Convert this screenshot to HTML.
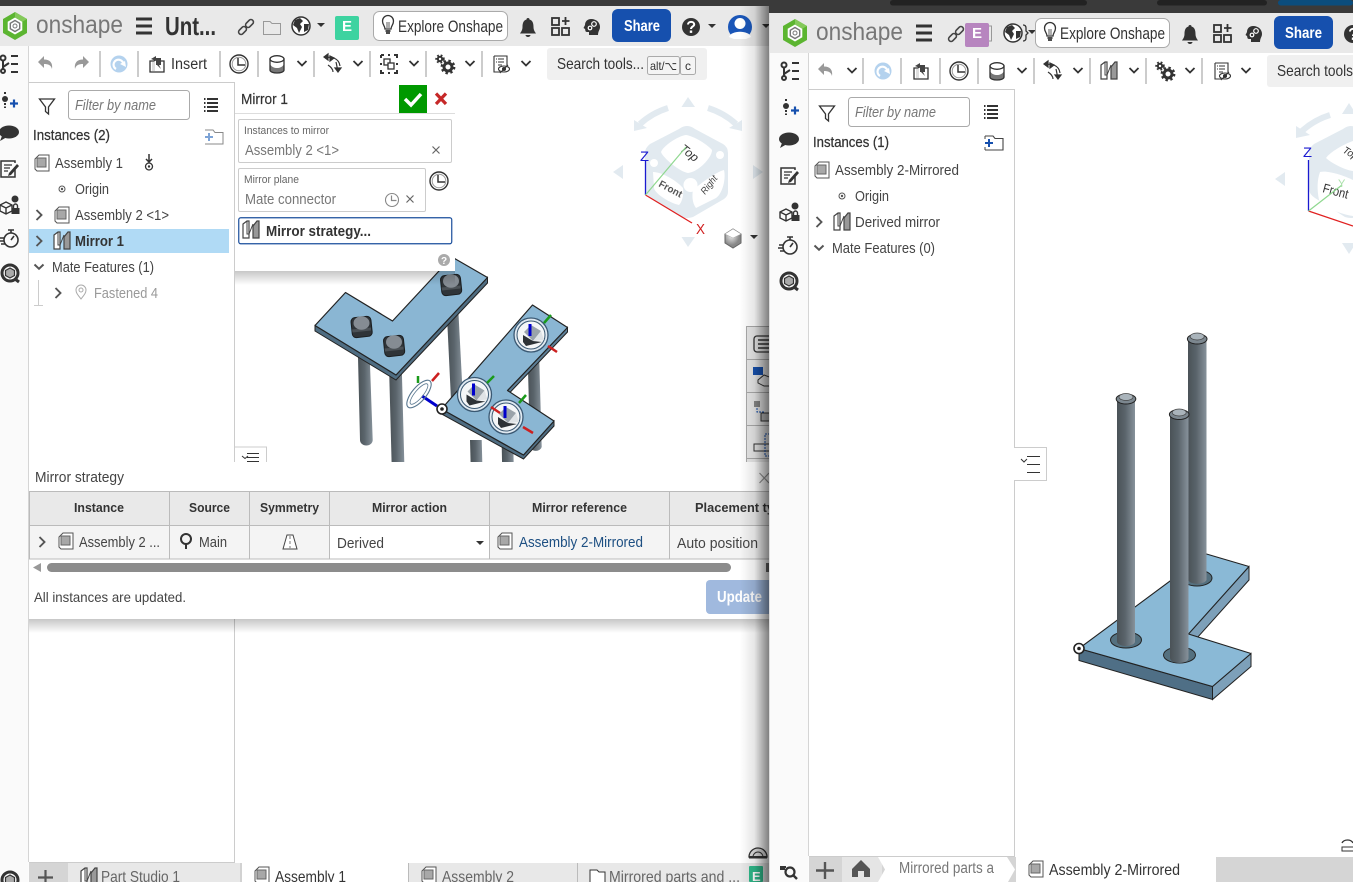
<!DOCTYPE html>
<html><head><meta charset="utf-8"><title>Onshape</title>
<style>
html,body{margin:0;padding:0;background:#fff;width:1353px;height:882px;overflow:hidden}
svg{display:block;position:absolute;left:0;top:0}
text{font-family:"Liberation Sans",sans-serif;font-size:14px;fill:#444}
.t{font-size:15px;fill:#444}
.b{font-weight:bold;fill:#333}
.m{font-size:13px;font-weight:bold;fill:#333}
.g{fill:#777}
.ph{font-style:italic;fill:#777;font-size:14.5px}
.l{font-size:11px;fill:#666}
</style></head><body>
<svg width="1353" height="882" viewBox="0 0 1353 882" xmlns="http://www.w3.org/2000/svg">
<defs>
<linearGradient id="cylg" x1="0" x2="1" y1="0" y2="0"><stop offset="0" stop-color="#4a5257"/><stop offset=".45" stop-color="#5a646b"/><stop offset="1" stop-color="#87929b"/></linearGradient>
<linearGradient id="sh" x1="0" x2="1" y1="0" y2="0"><stop offset="0" stop-color="#000" stop-opacity="0"/><stop offset=".5" stop-color="#000" stop-opacity=".1"/><stop offset="1" stop-color="#000" stop-opacity=".5"/></linearGradient>
<linearGradient id="shv" x1="0" x2="0" y1="0" y2="1"><stop offset="0" stop-color="#000" stop-opacity=".22"/><stop offset="1" stop-color="#000" stop-opacity="0"/></linearGradient>
<radialGradient id="cubeg" cx=".4" cy=".35"><stop offset="0" stop-color="#eee"/><stop offset="1" stop-color="#888"/></radialGradient>
<clipPath id="cleft"><rect x="0" y="0" width="769" height="882"/></clipPath>
<clipPath id="cright"><rect x="769" y="0" width="584" height="882"/></clipPath>
<clipPath id="cvp"><rect x="235" y="83" width="534" height="379"/></clipPath>

<g id="logo"><path d="M0 -14 L12 -7 V7 L0 14 L-12 7 V-7Z" fill="#5cb531"/><path d="M0 -8.500 L7.300 -4.200 V4.200 L0 8.500 L-7.300 4.200 V-4.200Z" fill="#fff"/><path d="M0 -14 L12 -7 L7.300 -4.200 L0 -8.500Z" fill="#84c95a"/><path d="M0 -5.500 L4.700 -2.700 V2.700 L0 5.500 L-4.700 2.700 V-2.700Z" fill="none" stroke="#777" stroke-width="1.400"/><circle r="2" fill="none" stroke="#777" stroke-width="1"/></g>
<g id="burger"><path d="M0 -8.500 H16 V-5.500 H0Z M0 -1.500 H16 V1.500 H0Z M0 5.500 H16 V8.500 H0Z" fill="#333"/></g>
<g id="link" fill="none" stroke="#444" stroke-width="1.600"><rect x="-8" y="-2.500" width="9" height="5" rx="2.500" transform="rotate(-45 -3.500 3.500) translate(0 3.500)"/><rect x="-1" y="-2.500" width="9" height="5" rx="2.500" transform="rotate(-45 3.500 -3.500) translate(0 -3.500)"/></g>
<g id="globe"><circle r="9" fill="#fff" stroke="#333" stroke-width="1.500"/><path d="M-6 -6 L-1 -8 L2 -5 L-1 -2 L1 1 L-2 7 L-4 2 L-8 -1Z M3 -2 L8 -2 L7 4 L3 6Z" fill="#333"/></g>
<g id="caret"><path d="M-4 -2 H4 L0 2Z" fill="#333"/></g>
<g id="bulb" fill="none" stroke="#333" stroke-width="1.300"><path d="M-3 4 C-3 1 -5.500 0 -5.500 -4 A5.500 5.500 0 0 1 5.500 -4 C5.500 0 3 1 3 4Z"/><path d="M-2.500 6 H2.500 M-2 8 H2" stroke-width="1.800"/><path d="M-1 3 V-3 M1 3 V-3" stroke-width=".8"/></g>
<g id="bell"><path d="M0 -9 C1 -9 1.500 -8.500 1.500 -7.500 C5 -6.500 5.500 -3 5.500 0 C5.500 3 7 5 8 6.500 H-8 C-7 5 -5.500 3 -5.500 0 C-5.500 -3 -5 -6.500 -1.500 -7.500 C-1.500 -8.500 -1 -9 0 -9Z M-2.500 8 H2.500 A2.500 2 0 0 1 -2.500 8Z" fill="#333"/></g>
<g id="apps" fill="none" stroke="#333" stroke-width="1.800"><rect x="-8" y="-8" width="7" height="7"/><rect x="-8" y="2" width="7" height="7"/><rect x="2" y="2" width="7" height="7"/><path d="M5.500 -9 V-1 M2 -5 H9.500"/></g>
<g id="head"><path d="M-1 -8 C5 -8 8 -4 8 0 C8 3 6 4 6 8 H-3 V5 H-5 C-7 5 -6.500 3 -7 2 L-8.500 1 L-7 -2 C-7 -6 -4 -8 -1 -8Z" fill="#333"/><circle cx="2" cy="-3" r="2.300" fill="none" stroke="#fff" stroke-width="1.200"/><circle cx="-2" cy="1" r="1.800" fill="none" stroke="#fff" stroke-width="1.200"/></g>
<g id="help"><circle r="9" fill="#333"/><path d="M-3 -2.500 C-3 -6 3.200 -6 3.200 -2.500 C3.200 -.5 0 -.5 0 2" fill="none" stroke="#fff" stroke-width="2"/><rect x="-1.200" y="3.500" width="2.400" height="2.400" fill="#fff"/></g>
<g id="undo"><path d="M-8 -1 L-2 -7 V-3.500 C4 -3.500 7 0 6 6 C5 2 2 1 -2 1 V5Z" fill="#999"/></g>
<g id="refresh"><circle r="8.500" fill="#b4d2ee"/><path d="M-3 5 A5 5 0 1 1 4.500 1" fill="none" stroke="#fff" stroke-width="2.200"/><path d="M1 0 L6 -3 L7 3Z" fill="#fff"/></g>
<g id="insert"><path d="M-7 -3 H-3 L-1 -5 H3 V-3 H7 V8 H-7Z" fill="#fff" stroke="#333" stroke-width="1.300"/><path d="M-6 -5 L-1 -8 V-6 H4 V1 H2 L4 5 L0 1 H-1 V-3Z" fill="#444"/><rect x="-5" y="-2" width="3" height="9" fill="#ddd"/></g>
<g id="clock"><circle r="9" fill="#fff" stroke="#333" stroke-width="1.400"/><circle r="6.800" fill="none" stroke="#999" stroke-width="1"/><path d="M-1 -6 V1 H6" fill="none" stroke="#333" stroke-width="1.500"/></g>
<g id="cylicon"><path d="M-7 -5 V6 C-7 10 7 10 7 6 V-5Z" fill="#777" stroke="#333" stroke-width="1.300"/><path d="M-6.300 -4 V1 C-4 5 4 5 6.300 1 V-4Z" fill="#fff"/><ellipse cy="-5" rx="7" ry="3.300" fill="#fff" stroke="#333" stroke-width="1.300"/></g>
<g id="chev"><path d="M-4.500 -2 L0 2.500 L4.500 -2" fill="none" stroke="#333" stroke-width="1.800"/></g>
<g id="chevb"><path d="M-4.500 -2.500 L0 1.800 L4.500 -2.500" fill="none" stroke="#555" stroke-width="2"/></g>
<g id="chevr"><path d="M-2.500 -5 L2.500 0 L-2.500 5" fill="none" stroke="#555" stroke-width="1.900"/></g>
<g id="mate" fill="none" stroke="#333" stroke-width="1.200"><path d="M-8 -5 C-2 -7 6 -5 7 3 M-5 2 C-2 4 0 6 0 9 M3 -1 C4 3 4 5 5 8" /><path d="M-9 -6 L-5 -9 V-3Z M-3 -7 L1 -5 L-3 -2Z M2 5 H8 L5 9Z" fill="#333"/></g>
<g id="boxes" fill="none" stroke="#333" stroke-width="1.300"><rect x="-5" y="-5" width="6" height="6" fill="#fff"/><rect x="-1" y="-1" width="6" height="6" fill="#fff"/><path d="M-8 -9 H-5 M-8 -9 V-6 M5 -9 H8 V-6 M-8 6 V9 H-5 M5 9 H8 V6 M-1 -9 H1 M-1 9 H1 M-8 -1 V1 M8 -1 V1" stroke-width="2"/></g>
<g id="gears"><g fill="none" stroke="#333"><circle cx="3" cy="3" r="4" stroke-width="3"/><circle cx="3" cy="3" r="6.200" stroke-width="2.400" stroke-dasharray="2.400 2.500"/><circle cx="-5" cy="-5" r="2.200" stroke-width="2"/><circle cx="-5" cy="-5" r="3.800" stroke-width="1.800" stroke-dasharray="1.800 1.900"/></g></g>
<g id="note" fill="none" stroke="#333" stroke-width="1.100"><path d="M-7 -8 H6 V2 M-7 -8 V8 H-1"/><path d="M-3 -5 H3 M-3 -2 H3 M-3 1 H1 M-5 -5 H-4 M-5 -2 H-4" /><ellipse cx="3" cy="5" rx="5.500" ry="3" fill="#fff"/><circle cx="3" cy="5" r="1.500" fill="#333"/><path d="M-1 9 L7 1" /></g>
<g id="mirror"><path d="M-8 -6 L-4 -9 H-2 V8 H-8Z" fill="#fff" stroke="#444" stroke-width="1.200"/><path d="M2 8 V-4 L6 -9 H8 V8Z" fill="#999" stroke="#444" stroke-width="1.200"/><path d="M-2 4 L2 -6 M-4 -9 V4 H-2" fill="none" stroke="#444" stroke-width="1"/></g>
<g id="funnel"><path d="M-7.500 -7 H7.500 L1.500 1 V8 L-1.500 5.500 V1Z" fill="#fff" stroke="#333" stroke-width="1.300"/></g>
<g id="list"><path d="M-4 -6 H7 M-4 -2 H7 M-4 2 H7 M-4 6 H7 M-7 -6 H-5.500 M-7 -2 H-5.500 M-7 2 H-5.500 M-7 6 H-5.500" stroke="#333" stroke-width="2"/></g>
<g id="fplus"><path d="M-9 -7 H-1 L1 -4.500 H9 V7 H-9" fill="#fff" stroke="#444" stroke-width="1.100"/><path d="M-9 -7 V-4 M-9 4 V7" stroke="#444"/><path d="M-9 0 H-1 M-5 -4 V4" stroke="#1650ae" stroke-width="2"/></g>
<g id="fplusl"><path d="M-9 -7 H-1 L1 -4.500 H9 V7 H-9" fill="#fff" stroke="#888" stroke-width="1"/><path d="M-9 0 H-1 M-5 -4 V4" stroke="#7da3d6" stroke-width="2"/></g>
<g id="asm"><path d="M-7 -4 L-3 -8 H7 V8 H-5 L-7 6Z" fill="#fff" stroke="#555" stroke-width="1"/><rect x="-5" y="-5" width="9" height="9" fill="#a8a8a8" stroke="#666"/></g>
<g id="origin"><circle r="3" fill="#fff" stroke="#555"/><circle r="1.200" fill="#555"/></g>
<g id="axis"><circle r="5" fill="#fff" stroke="#222" stroke-width="1.600"/><circle r="1.800" fill="#222"/></g>
<g id="tree" fill="none" stroke="#333" stroke-width="2"><circle cx="-6" cy="-6" r="2.500"/><circle cx="-6" cy="7" r="2"/><path d="M-6 -3 V5 M-6 3 L0 -1 M2 -8 H9 M2 0 H9 M2 8 H9"/></g>
<g id="addpt"><path d="M-4 -8 V-6 M-4 3 V8" stroke="#333" stroke-width="2" stroke-dasharray="2 1.500"/><circle cx="-4" cy="-1" r="3" fill="#333"/><path d="M1 3.500 H9 M5 -.500 V7.500" stroke="#1650ae" stroke-width="2.200"/></g>
<g id="bubble"><ellipse cx="0" cy="-2" rx="10" ry="6.500" fill="#333"/><path d="M-7 2 L-9 7 L-2 3Z" fill="#333"/></g>
<g id="form" fill="none" stroke="#333" stroke-width="1.500"><path d="M6 -2 V8 H-8 V-8 H6 V-6"/><path d="M-5 -4 H3 M-5 -1 H1 M-5 2 H-1" stroke-width="1.200"/><path d="M0 4 L8 -5 L10 -3 L2 6 L-1 7Z" fill="#333" stroke="none"/></g>
<g id="parts" fill="none" stroke="#333" stroke-width="1.400"><path d="M-9 0 L-3 -3 L3 0 V6 L-3 9 L-9 6Z M-9 0 L-3 3 L3 0 M-3 3 V9"/><circle cx="6" cy="-6" r="3.500" fill="#333" stroke="none"/><rect x="2.500" y="3" width="8" height="6" fill="#333" stroke="none"/><path d="M4.500 3 V1 A2 2 0 0 1 8.500 1 V3"/></g>
<g id="timer" fill="none" stroke="#333" stroke-width="1.600"><circle cx="2" cy="1" r="7"/><path d="M-1 -9 H5 M2 -9 V-6 M2 1 L5 -3 M-9 -1 H-5 M-10 2 H-5 M-8 5 H-4"/></g>
<g id="search"><circle r="8" fill="none" stroke="#333" stroke-width="3"/><path d="M0 -5 L4.500 -2.500 V2.500 L0 5 L-4.500 2.500 V-2.500Z" fill="#aaa" stroke="#333" stroke-width="1.200"/><path d="M5 6 L9 9" stroke="#333" stroke-width="3"/></g>
<g id="x"><path d="M-3.500 -3.500 L3.500 3.500 M3.500 -3.500 L-3.500 3.500" stroke="#666" stroke-width="1.200" fill="none"/></g>
<g id="smallclock"><circle r="6.500" fill="#fff" stroke="#888" stroke-width="1.100"/><path d="M-.5 -4.500 V.5 H4.500" fill="none" stroke="#888" stroke-width="1.200"/></g>
<g id="pin"><circle cy="-2" r="5" fill="none" stroke="#333" stroke-width="2"/><path d="M0 3 V8" stroke="#333" stroke-width="2"/></g>
<g id="tri"><path d="M-7 7 L-3 -7 H3 L7 7Z" fill="#fff" stroke="#444"/><path d="M0 -6 V7" stroke="#999" stroke-width="1.300" stroke-dasharray="3 2"/></g>
<g id="screw"><rect x="-10" y="-9" width="20" height="20" rx="4" transform="rotate(-6)" fill="#2f3438" stroke="#1b1e20"/><path d="M-9.500 3.500 L9.500 1.500 V4.500 L-9 6.500Z" fill="#4b5156"/><ellipse cy="-3" rx="8" ry="6.800" fill="#858c93"/></g>
<g id="conn"><circle r="17" fill="#dfe9f1" stroke="#3a5872" stroke-width="1.300"/><circle r="14" fill="#f4f6f7" stroke="#3a5872" stroke-width="1"/><path d="M-7 -3 L0 -10 L10 -4 L2 6Z" fill="#9aa3aa"/><path d="M10 -4 L13 5 L2 6Z" fill="#dfe3e6"/><path d="M-8 0 L2 6 L11 7 L-5 11 L-8 7Z" fill="#2d3236"/><path d="M-1 -11 V1" stroke="#0000cc" stroke-width="3"/></g>
<g id="frame"><path d="M0 -46 Q4 -46 8 -43 L36 -28 Q41 -25 41 -19 V20 Q41 24 37 27 L6 45 Q0 47 -6 45 L-36 26 Q-42 22 -42 17 V-19 Q-42 -24 -37 -28 L-8 -43 Q-4 -46 0 -46Z" fill="#e2eaf0"/></g>
</defs>

<!-- LEFT WINDOW -->
<g clip-path="url(#cleft)">
<rect width="769" height="882" fill="#fff"/>
<rect width="769" height="6" fill="#3a3a3a"/>
<rect y="6" width="769" height="40" fill="#e9e9e9"/>
<use href="#logo" x="15" y="26"/>
<text x="36" y="33" style="font-size:25px;fill:#777" textLength="87" lengthAdjust="spacingAndGlyphs">onshape</text>
<use href="#burger" x="136" y="26"/>
<text x="165" y="35" style="font-size:26px;font-weight:bold;fill:#333" textLength="51" lengthAdjust="spacingAndGlyphs">Unt...</text>
<use href="#link" x="246" y="27"/>
<path d="M263.500 34.500 V21.500 H270 L272 23.500 H280.500 V34.500Z" fill="none" stroke="#999" stroke-width="1"/>
<use href="#globe" x="301" y="26"/>
<use href="#caret" x="321" y="25"/>
<rect x="335" y="16" width="24" height="24" rx="2" fill="#3dd3a0"/>
<text x="342" y="31" style="font-size:15px;font-weight:bold;fill:#fff">E</text>
<rect x="373.500" y="11.500" width="134" height="29" rx="6" fill="#fff" stroke="#aaa"/>
<use href="#bulb" x="388" y="25"/>
<text x="398" y="32" style="font-size:16.500px;fill:#333" textLength="105" lengthAdjust="spacingAndGlyphs">Explore Onshape</text>
<use href="#bell" x="528" y="27"/>
<use href="#apps" x="560" y="26"/>
<use href="#head" x="592" y="27"/>
<rect x="612" y="9" width="59" height="33" rx="6" fill="#1650ae"/>
<text x="624" y="31" style="font-size:15.500px;font-weight:bold;fill:#fff" textLength="36" lengthAdjust="spacingAndGlyphs">Share</text>
<use href="#help" x="691" y="27"/>
<use href="#caret" x="712" y="26"/>
<circle cx="740" cy="27" r="12" fill="#1a56b8"/>
<circle cx="740" cy="23.500" r="5.500" fill="#fff"/>
<path d="M729 37 C731 30 749 30 751 37 L746 39 H734Z" fill="#fff"/>
<use href="#caret" x="766" y="26"/>

<!-- toolbar -->
<g fill="#ccc"><rect x="99" y="51" width="2" height="26"/><rect x="137" y="51" width="2" height="26"/><rect x="219" y="51" width="2" height="26"/><rect x="257" y="51" width="2" height="26"/><rect x="313" y="51" width="2" height="26"/><rect x="369" y="51" width="2" height="26"/><rect x="425" y="51" width="2" height="26"/><rect x="481" y="51" width="2" height="26"/></g>
<use href="#undo" x="46" y="63"/>
<use href="#undo" transform="translate(81 63) scale(-1 1)"/>
<use href="#refresh" x="119" y="64"/>
<use href="#insert" x="157" y="64"/>
<text x="171" y="69" style="font-size:15.500px;fill:#333" textLength="36" lengthAdjust="spacingAndGlyphs">Insert</text>
<use href="#clock" x="239" y="64"/>
<use href="#cylicon" x="277" y="64"/><use href="#chev" x="302" y="63"/>
<use href="#mate" x="333" y="63"/><use href="#chev" x="358" y="63"/>
<use href="#boxes" x="389" y="64"/><use href="#chev" x="414" y="63"/>
<use href="#gears" x="445" y="64"/><use href="#chev" x="470" y="63"/>
<use href="#note" x="501" y="64"/><use href="#chev" x="526" y="63"/>
<rect x="547" y="48" width="160" height="32" rx="3" fill="#f0f0f0"/>
<text x="557" y="69" style="font-size:16px;fill:#333" textLength="87" lengthAdjust="spacingAndGlyphs">Search tools...</text>
<rect x="647.500" y="56.500" width="32" height="18" rx="2" fill="#f4f4f4" stroke="#aaa"/>
<text x="650" y="70" style="font-size:12px;fill:#333" textLength="27" lengthAdjust="spacingAndGlyphs">alt/⌥</text>
<rect x="680.500" y="56.500" width="15" height="18" rx="2" fill="#f4f4f4" stroke="#aaa"/>
<text x="685" y="70" style="font-size:12px;fill:#333">c</text>

<!-- left strip -->
<rect x="0" y="46" width="28.500" height="836" fill="#fafafa"/>
<path d="M28.500 46 V862" stroke="#d5d5d5"/>
<use href="#tree" x="9" y="64"/>
<use href="#addpt" x="9" y="100"/>
<use href="#bubble" x="9" y="134"/>
<use href="#form" x="9" y="169"/>
<use href="#parts" x="9" y="205"/>
<use href="#timer" x="9" y="239"/>
<use href="#search" x="10" y="273"/>
<use href="#search" x="10" y="880"/>

<!-- feature panel -->
<path d="M29 82.500 H235 M234.500 82 V862" stroke="#ccc" fill="none"/>
<use href="#funnel" x="47" y="106"/>
<rect x="68.500" y="90.500" width="121" height="29" rx="3" fill="#fff" stroke="#aaa"/>
<text x="75" y="110" class="ph" textLength="81" lengthAdjust="spacingAndGlyphs">Filter by name</text>
<use href="#list" x="211" y="105"/>
<text x="33" y="140" class="t" style="fill:#333;stroke:#333;stroke-width:.25" textLength="77" lengthAdjust="spacingAndGlyphs">Instances (2)</text>
<use href="#fplusl" x="214" y="137"/>
<use href="#asm" x="42" y="163"/>
<text x="55" y="168" class="t" textLength="68" lengthAdjust="spacingAndGlyphs">Assembly 1</text>
<g transform="translate(149 162)"><path d="M0 -8 V-1 M-3 -3 L0 0 L3 -3" stroke="#333" stroke-width="1.500" fill="none"/><circle cy="4.500" r="3.500" fill="#fff" stroke="#333" stroke-width="1.300"/><circle cy="4.500" r="1.200" fill="#333"/></g>
<use href="#origin" x="62" y="189"/>
<text x="75" y="194" class="t" textLength="34" lengthAdjust="spacingAndGlyphs">Origin</text>
<use href="#chevr" x="39" y="215"/>
<use href="#asm" x="62" y="215"/>
<text x="75" y="220" class="t" textLength="94" lengthAdjust="spacingAndGlyphs">Assembly 2 &lt;1&gt;</text>
<rect x="29" y="229" width="200" height="24" fill="#b0daf5"/>
<use href="#chevr" x="39" y="241"/>
<use href="#mirror" x="62" y="241"/>
<text x="75" y="246" class="t b" textLength="49" lengthAdjust="spacingAndGlyphs">Mirror 1</text>
<use href="#chevb" x="39" y="267"/>
<text x="52" y="272" class="t" textLength="102" lengthAdjust="spacingAndGlyphs">Mate Features (1)</text>
<path d="M38.500 280 V305 M34 305.500 H43" stroke="#ccc" fill="none"/>
<use href="#chevr" x="58" y="293"/>
<path d="M81 299 C78 295 76 293 76 290 A5 5 0 0 1 86 290 C86 293 84 295 81 299Z" fill="#fff" stroke="#aaa"/><circle cx="81" cy="290" r="2" fill="none" stroke="#aaa"/>
<text x="94" y="298" class="t" style="fill:#999" textLength="64" lengthAdjust="spacingAndGlyphs">Fastened 4</text>

<!-- 3D left -->
<g clip-path="url(#cvp)">
<g>
<path d="M357.700 345 H369.300 L372.700 440 A6.300 5.500 0 0 1 360 440Z" fill="url(#cylg)"/>
<path d="M389 365 H401.700 L404.500 470 H391.800Z" fill="url(#cylg)"/>
<path d="M446.700 310 H458.300 L463 400 H451Z" fill="url(#cylg)"/>
<path d="M527.500 350 H539 L541.700 447 A6 5 0 0 1 530 447Z" fill="url(#cylg)"/>
<path d="M470 440 H481.700 L482.500 470 H470.800Z" fill="url(#cylg)"/>
<path d="M501.700 445 H513.300 L513.800 470 H502.200Z" fill="url(#cylg)"/>
</g>
<path d="M315 325.500 V331 L396 380 L487.500 283 V277.500 L396 375Z" fill="#4f6d82" stroke="#222" stroke-width="1"/>
<path d="M345.500 292.500 L392.500 321 L452 257 L487.500 277.500 L396 375 L315 325.500Z" fill="#8ab6d3" stroke="#222" stroke-width="1.200" stroke-linejoin="round"/>
<use href="#screw" x="361.500" y="326"/>
<use href="#screw" x="394" y="345"/>
<use href="#screw" x="451" y="284"/>
<path d="M441.500 409 V414 L523.500 459 L554 426 V421 L523.500 455Z" fill="#4f6d82" stroke="#222"/>
<path d="M567.500 327.500 V332 L507.500 395 V390.500Z" fill="#5d7f97" stroke="#222"/>
<path d="M532.500 305 L567.500 327.500 L507.500 390.500 L554 421 L523.500 455 L441.500 409Z" fill="#8ab6d3" stroke="#222" stroke-width="1.200" stroke-linejoin="round"/>
<use href="#conn" x="531" y="335"/>
<use href="#conn" x="474.500" y="394.500"/>
<use href="#conn" x="506" y="417"/>
<g stroke-width="2.500" fill="none">
<path d="M544 323 L551 315 M487 383 L494 376 M519 403 L526 395" stroke="#1a9a1a"/>
<path d="M548 346 L557 352 M491 407 L500 413 M523 427 L533 433" stroke="#cc2020"/>
<path d="M418 383 V376" stroke="#1a9a1a"/><path d="M432 381 L439 373" stroke="#cc2020"/>
<path d="M422 396 L437 406" stroke="#0000cc" stroke-width="3"/>
</g>
<ellipse cx="419" cy="394" rx="7" ry="17" transform="rotate(40 419 394)" fill="none" stroke="#5a7890" stroke-width="1.100"/>
<ellipse cx="419" cy="394" rx="4" ry="13" transform="rotate(40 419 394)" fill="none" stroke="#5a7890" stroke-width=".8"/>
<use href="#axis" x="442" y="409"/>

<!-- gizmo -->
<g fill="#e2eaf0">
<path d="M688 97 L695 107 H681.500Z"/><path d="M688 247 L695 237 H681.500Z"/><path d="M613 172 L623 165 V179Z"/><path d="M763 172 L753 165 V179Z"/>
<path d="M634 131 V120 L647 128Z M742 131 V120 L729 128Z"/>
</g>
<path d="M668 108 Q652 113 640 124 M708 108 Q724 113 736 124" stroke="#e2eaf0" stroke-width="6" fill="none"/>
<use href="#frame" x="687" y="172"/>
<path d="M686 135 C694 136 708 145 712 150 C712 158 698 172 688 173 C680 172 663 158 661 152 C663 146 678 136 686 135Z" fill="#fff"/>
<path d="M653 172 C663 172 678 182 683 188 C684 195 682 202 679 205 C670 203 655 194 654 188Z" fill="#fff"/>
<path d="M693 190 C701 183 716 172 724 170 C726 178 723 193 716 198 L696 208 C692 203 692 195 693 190Z" fill="#fff"/>
<circle cx="690.500" cy="185" r="7" fill="#fff"/>
<circle cx="654" cy="163" r="4" fill="#fff"/><circle cx="720" cy="155" r="4" fill="#fff"/>
<text transform="translate(679 150) rotate(38)" style="font-size:12px;fill:#333;font-style:italic" textLength="20" lengthAdjust="spacingAndGlyphs">Top</text>
<text transform="translate(658 186) rotate(28)" style="font-size:10px;fill:#555;font-weight:bold" textLength="25" lengthAdjust="spacingAndGlyphs">Front</text>
<text transform="translate(705 195) rotate(-52)" style="font-size:9.500px;fill:#444;font-style:italic" textLength="21" lengthAdjust="spacingAndGlyphs">Right</text>
<path d="M645.500 195 V160" stroke="#1a1ad0" stroke-width="1.300"/>
<path d="M645.500 195 L692 223" stroke="#e02020" stroke-width="1.300"/>
<path d="M645.500 195 L686 147" stroke="#8fd88f" stroke-width="1.200"/>
<text x="640" y="161" style="font-size:14px;fill:#1a1ad0" textLength="9" lengthAdjust="spacingAndGlyphs">Z</text>
<text x="696" y="234" style="font-size:15px;fill:#d02020" textLength="9" lengthAdjust="spacingAndGlyphs">X</text>
<path d="M725 234 L733 229 L741 234 V243 L733 248 L725 243Z" fill="url(#cubeg)" stroke="#666"/>
<path d="M725 234 L733 238 L741 234 L733 229Z" fill="#fff" stroke="#aaa" stroke-width=".5"/>
<use href="#caret" x="754" y="237"/>

<!-- right side rail -->
<rect x="746.500" y="326.500" width="30" height="140" fill="#e8e8e8" stroke="#aaa"/>
<path d="M746 359.500 H769 M746 392.500 H769 M746 425.500 H769 M746 458.500 H769" stroke="#aaa"/>
<rect x="754" y="336" width="18" height="16" rx="3" fill="none" stroke="#333" stroke-width="1.300"/>
<path d="M758 340 H772 M758 344 H772 M758 348 H772" stroke="#333" stroke-width="1.500"/>
<rect x="753" y="367" width="10" height="8" fill="#1650ae"/>
<path d="M758 380 L764 375 L772 378 V386 L764 386 L758 383Z" fill="none" stroke="#333"/>
<rect x="754" y="401" width="6" height="6" fill="#888"/>
<path d="M757 408 V412 H765" stroke="#1650ae" fill="none" stroke-dasharray="2 1"/>
<rect x="761" y="413" width="10" height="8" fill="#bbb" stroke="#333"/>
<rect x="754" y="444" width="18" height="7" fill="none" stroke="#333"/>
<rect x="765" y="434" width="8" height="22" fill="none" stroke="#1650ae" stroke-dasharray="2 1"/>
<!-- list tab -->
<rect x="234.500" y="447" width="32" height="20" fill="#fff" stroke="#ccc"/>
<path d="M247 453.500 H259 M247 457.500 H259 M247 461.500 H259" stroke="#333"/>
<path d="M242 456 L245 458.500 L248 456" stroke="#333" fill="none"/>
</g>

<!-- Mirror dialog -->
<rect x="235" y="271" width="220" height="14" fill="url(#shv)"/>
<rect x="235" y="85" width="220" height="186" fill="#fff"/>
<path d="M235 113.500 H455" stroke="#ddd"/>
<text x="241" y="104" class="t" style="fill:#333;stroke:#333;stroke-width:.2" textLength="47" lengthAdjust="spacingAndGlyphs">Mirror 1</text>
<rect x="399" y="85" width="28" height="28" fill="#009900"/>
<path d="M405 99 L411 105 L421 94" stroke="#fff" stroke-width="3.500" fill="none"/>
<path d="M436 93.500 L446 104 M446 93.500 L436 104" stroke="#c62828" stroke-width="3.200"/>
<rect x="238.500" y="119.500" width="213" height="43" rx="1.500" fill="#fff" stroke="#ccc"/>
<text x="244" y="134" class="l" textLength="85" lengthAdjust="spacingAndGlyphs">Instances to mirror</text>
<text x="245" y="155" class="t g" textLength="94" lengthAdjust="spacingAndGlyphs">Assembly 2 &lt;1&gt;</text>
<use href="#x" x="436" y="150"/>
<rect x="238.500" y="168.500" width="187" height="43" rx="1.500" fill="#fff" stroke="#ccc"/>
<text x="244" y="183" class="l" textLength="55" lengthAdjust="spacingAndGlyphs">Mirror plane</text>
<text x="245" y="204" class="t g" textLength="91" lengthAdjust="spacingAndGlyphs">Mate connector</text>
<use href="#smallclock" x="392" y="200"/>
<use href="#x" x="410" y="199"/>
<use href="#clock" x="439" y="181"/>
<rect x="238.750" y="217.750" width="213" height="26" rx="2" fill="#fff" stroke="#1a4e9c" stroke-width="1.200"/>
<use href="#mirror" x="251" y="230"/>
<text x="266" y="236" class="t b" textLength="105" lengthAdjust="spacingAndGlyphs">Mirror strategy...</text>
<circle cx="444" cy="260" r="6" fill="#aaa"/>
<text x="441" y="264" style="font-size:10px;font-weight:bold;fill:#fff">?</text>

<!-- Mirror strategy panel -->
<rect x="29" y="619" width="740" height="14" fill="url(#shv)"/>
<rect x="29" y="462" width="740" height="157" fill="#fff"/>
<text x="35" y="482" class="t" style="fill:#444" textLength="89" lengthAdjust="spacingAndGlyphs">Mirror strategy</text>
<path d="M759.500 473 L769 483 M769 473 L759.500 483" stroke="#999" stroke-width="1.200"/>
<rect x="29" y="492" width="740" height="33" fill="#e9e9e9"/>
<rect x="29" y="525" width="740" height="34" fill="#f4f4f4"/>
<rect x="329" y="525" width="160" height="34" fill="#fff"/>
<path d="M29 491.500 H769 M29 525.500 H769 M29 559 H769 M29.500 492 V559 M169.500 492 V559 M249.500 492 V559 M329.500 492 V559 M489.500 492 V559 M669.500 492 V559" stroke="#bbb" fill="none"/>
<text x="74" y="512" class="m" textLength="50" lengthAdjust="spacingAndGlyphs">Instance</text>
<text x="189" y="512" class="m" textLength="41" lengthAdjust="spacingAndGlyphs">Source</text>
<text x="260" y="512" class="m" textLength="59" lengthAdjust="spacingAndGlyphs">Symmetry</text>
<text x="372" y="512" class="m" textLength="75" lengthAdjust="spacingAndGlyphs">Mirror action</text>
<text x="532" y="512" class="m" textLength="95" lengthAdjust="spacingAndGlyphs">Mirror reference</text>
<text x="695" y="512" class="m" textLength="79" lengthAdjust="spacingAndGlyphs">Placement ty</text>
<use href="#chevr" x="42" y="542"/>
<use href="#asm" x="66" y="541"/>
<text x="79" y="547" class="t" textLength="81" lengthAdjust="spacingAndGlyphs">Assembly 2 ...</text>
<use href="#pin" x="186" y="541"/>
<text x="199" y="547" class="t" textLength="28" lengthAdjust="spacingAndGlyphs">Main</text>
<use href="#tri" x="290" y="542"/>
<text x="337" y="548" class="t" textLength="47" lengthAdjust="spacingAndGlyphs">Derived</text>
<use href="#caret" x="480" y="543"/>
<use href="#asm" x="505" y="541"/>
<text x="519" y="547" class="t" style="fill:#1d4f82" textLength="124" lengthAdjust="spacingAndGlyphs">Assembly 2-Mirrored</text>
<text x="677" y="548" class="t" textLength="81" lengthAdjust="spacingAndGlyphs">Auto position</text>
<path d="M33 567.500 L41 563 V572Z" fill="#999"/>
<rect x="47" y="563" width="684" height="9" rx="4.500" fill="#8c8c8c"/>
<rect x="766" y="563" width="4" height="9" fill="#666"/>
<text x="34" y="602" style="font-size:14px;fill:#444" textLength="152" lengthAdjust="spacingAndGlyphs">All instances are updated.</text>
<rect x="706" y="580" width="70" height="34" rx="4" fill="#a0b9de"/>
<text x="717" y="602" style="font-size:15.500px;fill:#fff;font-weight:bold" textLength="45" lengthAdjust="spacingAndGlyphs">Update</text>

<!-- bottom -->
<path d="M29 862.500 H235" stroke="#ccc"/>
<g transform="translate(758 851)"><path d="M-9 6 A9 9 0 0 1 9 6Z" fill="#ddd" stroke="#333" stroke-width="1.300"/><path d="M-5 6 A5 5 0 0 1 5 6" fill="none" stroke="#333"/><rect x="-9" y="5" width="18" height="2.500" fill="#333"/></g>
<rect x="29" y="863" width="740" height="19" fill="#e8e8e8"/>
<rect x="29" y="863" width="39" height="19" fill="#d5d5d5"/>
<path d="M38 877.500 H53 M45.500 870 V882" stroke="#555" stroke-width="2.200"/>
<path d="M241 863 V882 M408.500 863 V882 M577.500 863 V882" stroke="#bbb"/>
<rect x="242" y="863" width="166" height="19" fill="#fff"/>
<use href="#mirror" x="89" y="877"/>
<text x="101" y="882" style="font-size:16px;fill:#666" textLength="79" lengthAdjust="spacingAndGlyphs">Part Studio 1</text>
<use href="#asm" x="262" y="875"/>
<text x="275" y="882" style="font-size:16px;fill:#333" textLength="71" lengthAdjust="spacingAndGlyphs">Assembly 1</text>
<use href="#asm" x="429" y="875"/>
<text x="442" y="882" style="font-size:16px;fill:#666" textLength="72" lengthAdjust="spacingAndGlyphs">Assembly 2</text>
<path d="M590 882 V870 H597 L599 872 H605 V882" fill="#fff" stroke="#333"/>
<text x="609" y="882" style="font-size:16px;fill:#666" textLength="131" lengthAdjust="spacingAndGlyphs">Mirrored parts and ...</text>
<rect x="749" y="866" width="14" height="16" rx="1" fill="#2fb98a"/>
<text x="752" y="881" style="font-size:13px;font-weight:bold;fill:#fff">E</text>
</g>

<!-- shadow between windows -->
<rect x="740" y="6" width="29" height="876" fill="url(#sh)"/>

<!-- RIGHT WINDOW -->
<g clip-path="url(#cright)">
<rect x="769" y="0" width="584" height="882" fill="#fff"/>
<rect x="769" y="0" width="584" height="13" fill="#3a3a3a"/>
<rect x="890" y="0" width="197" height="5.500" rx="3" fill="#222"/>
<rect x="1157" y="0" width="110" height="5.500" rx="3" fill="#222"/>
<rect x="1278" y="0" width="75" height="5.500" rx="3" fill="#0b4d7d"/>
<rect x="769" y="13" width="584" height="40" fill="#e9e9e9"/>
<use href="#logo" x="795" y="33"/>
<text x="816" y="40" style="font-size:25px;fill:#777" textLength="87" lengthAdjust="spacingAndGlyphs">onshape</text>
<use href="#burger" x="916" y="33"/>
<use href="#link" x="956" y="34"/>
<path d="M989 26 H991.500 V41 H989" fill="none" stroke="#999"/>
<rect x="965" y="23" width="24" height="24" rx="2" fill="#b785bf"/>
<text x="972" y="38" style="font-size:15px;font-weight:bold;fill:#fff">E</text>
<use href="#globe" x="1013" y="33"/>
<path d="M1023 25 Q1026 25 1026 28 V31 L1028 33 L1026 35 V38 Q1026 41 1023 41" fill="none" stroke="#333" stroke-width="1.300"/>
<use href="#caret" x="1032" y="32"/>
<rect x="1035.500" y="18.500" width="134" height="29" rx="6" fill="#fff" stroke="#aaa"/>
<use href="#bulb" x="1050" y="32"/>
<text x="1060" y="39" style="font-size:16.500px;fill:#333" textLength="105" lengthAdjust="spacingAndGlyphs">Explore Onshape</text>
<use href="#bell" x="1190" y="34"/>
<use href="#apps" x="1222" y="33"/>
<use href="#head" x="1254" y="34"/>
<rect x="1274" y="16" width="59" height="33" rx="6" fill="#1650ae"/>
<text x="1285" y="38" style="font-size:15.500px;font-weight:bold;fill:#fff" textLength="37" lengthAdjust="spacingAndGlyphs">Share</text>
<use href="#help" x="1353" y="34"/>

<g fill="#ccc"><rect x="862" y="58" width="2" height="26"/><rect x="900" y="58" width="2" height="26"/><rect x="939" y="58" width="2" height="26"/><rect x="977" y="58" width="2" height="26"/><rect x="1033" y="58" width="2" height="26"/><rect x="1089" y="58" width="2" height="26"/><rect x="1145" y="58" width="2" height="26"/><rect x="1201" y="58" width="2" height="26"/></g>
<use href="#undo" x="826" y="70"/><use href="#chev" x="852" y="70"/>
<use href="#refresh" x="883" y="71"/>
<use href="#insert" x="921" y="71"/>
<use href="#clock" x="959" y="71"/>
<use href="#cylicon" x="997" y="71"/><use href="#chev" x="1022" y="70"/>
<use href="#mate" x="1053" y="70"/><use href="#chev" x="1078" y="70"/>
<use href="#mirror" x="1109" y="71"/><use href="#chev" x="1134" y="70"/>
<use href="#gears" x="1165" y="71"/><use href="#chev" x="1190" y="70"/>
<use href="#note" x="1222" y="71"/><use href="#chev" x="1246" y="70"/>
<rect x="1267" y="55" width="100" height="32" rx="3" fill="#f0f0f0"/>
<text x="1277" y="76" style="font-size:16px;fill:#333" textLength="76" lengthAdjust="spacingAndGlyphs">Search tools</text>

<rect x="770" y="53" width="38.500" height="829" fill="#fafafa"/>
<path d="M769.500 13 V882" stroke="#ddd"/>
<path d="M808.500 53 V856" stroke="#d5d5d5"/>
<use href="#tree" x="790" y="71"/>
<use href="#addpt" x="790" y="107"/>
<use href="#bubble" x="789" y="141"/>
<use href="#form" x="789" y="176"/>
<use href="#parts" x="789" y="212"/>
<use href="#timer" x="788" y="246"/>
<use href="#search" x="789" y="281"/>
<g transform="translate(789 872)"><path d="M-9 -5 H-3 M-9 -3 H-4" stroke="#333" stroke-width="2"/><circle cx="1" cy="0" r="4.500" fill="none" stroke="#333" stroke-width="2.200"/><path d="M4 3 L8 7" stroke="#333" stroke-width="2.400"/></g>

<path d="M809 89.500 H1015 M1014.500 89 V856" stroke="#ccc" fill="none"/>
<use href="#funnel" x="827" y="113"/>
<rect x="848.500" y="97.500" width="121" height="29" rx="3" fill="#fff" stroke="#aaa"/>
<text x="855" y="117" class="ph" textLength="81" lengthAdjust="spacingAndGlyphs">Filter by name</text>
<use href="#list" x="991" y="112"/>
<text x="813" y="147" class="t" style="fill:#333;stroke:#333;stroke-width:.25" textLength="76" lengthAdjust="spacingAndGlyphs">Instances (1)</text>
<use href="#fplus" x="994" y="143"/>
<use href="#asm" x="822" y="170"/>
<text x="835" y="175" class="t" textLength="124" lengthAdjust="spacingAndGlyphs">Assembly 2-Mirrored</text>
<use href="#origin" x="842" y="196"/>
<text x="855" y="201" class="t" textLength="34" lengthAdjust="spacingAndGlyphs">Origin</text>
<use href="#chevr" x="819" y="222"/>
<use href="#mirror" x="842" y="222"/>
<text x="855" y="227" class="t" textLength="85" lengthAdjust="spacingAndGlyphs">Derived mirror</text>
<use href="#chevb" x="819" y="248"/>
<text x="832" y="253" class="t" textLength="103" lengthAdjust="spacingAndGlyphs">Mate Features (0)</text>

<!-- gizmo right -->
<g fill="#e2eaf0">
<path d="M1349 103 L1356 114 H1342Z"/>
<path d="M1349 254 L1356 243 H1342Z"/>
<path d="M1275 179 L1285 172 V186Z"/>
<path d="M1296 138 V126 L1310 135Z"/>
</g>
<path d="M1330 115 Q1314 120 1302 131" stroke="#e2eaf0" stroke-width="6" fill="none"/>
<use href="#frame" x="1351" y="172"/>
<path d="M1353 141 C1344 144 1330 152 1326 158 C1330 162 1344 170 1353 171Z" fill="#fff"/>
<path d="M1320 172 C1328 170 1345 176 1353 180 V216 C1340 214 1325 208 1319 200 C1317 190 1317 180 1320 172Z" fill="#fff"/>
<text transform="translate(1342 152) rotate(30)" style="font-size:10px;fill:#333;font-style:italic">Top</text>
<text transform="translate(1322 192) rotate(15)" style="font-size:13px;fill:#333" textLength="26" lengthAdjust="spacingAndGlyphs">Front</text>
<path d="M1308.500 211 V160" stroke="#1a1ad0" stroke-width="1.300"/>
<path d="M1308.500 211 L1353 226" stroke="#e02020" stroke-width="1.200"/>
<path d="M1308.500 211 L1342 185" stroke="#8fd88f" stroke-width="1.200"/>
<text x="1303" y="157" style="font-size:14px;fill:#1a1ad0" textLength="9" lengthAdjust="spacingAndGlyphs">Z</text>
<text x="1338" y="187" style="font-size:11px;fill:#a8e0a8">Y</text>

<!-- 3D right -->
<path d="M1079 648.500 V660.500 L1212.500 699.500 V686.500Z" fill="#4f6f86" stroke="#222" stroke-width="1"/>
<path d="M1212.500 686.500 V699.500 L1251 666.500 V653.500Z" fill="#7da0b9" stroke="#222" stroke-width="1"/>
<path d="M1188 634 V648 L1249 580 V566.500Z" fill="#7da0b9" stroke="#222" stroke-width="1"/>
<path d="M1206.500 554 L1249 566.500 L1188.500 634 L1251 653.500 L1212.500 686.500 L1079 648.500Z" fill="#8ab9d6" stroke="#222" stroke-width="1.100" stroke-linejoin="round"/>
<ellipse cx="1197" cy="578" rx="15" ry="8" fill="#54707f" stroke="#222"/>
<ellipse cx="1126" cy="640" rx="15.500" ry="8" fill="#54707f" stroke="#222"/>
<ellipse cx="1179.500" cy="655" rx="16" ry="8" fill="#54707f" stroke="#222"/>
<g>
<path d="M1188 339 V580 A9.500 5 0 0 0 1206.500 580 V339Z" fill="url(#cylg)"/>
<ellipse cx="1197.200" cy="339" rx="9.800" ry="5" fill="#7c878f" stroke="#222"/>
<ellipse cx="1197.200" cy="336.500" rx="7" ry="3.500" fill="#aab4bb" stroke="#444" stroke-width=".7"/>
<path d="M1117 400 V642 A9.200 5 0 0 0 1135 642 V400Z" fill="url(#cylg)"/>
<ellipse cx="1126" cy="399" rx="9.800" ry="5" fill="#7c878f" stroke="#222"/>
<ellipse cx="1126" cy="397" rx="7" ry="3.500" fill="#aab4bb" stroke="#444" stroke-width=".7"/>
<path d="M1170 415 V658 A9.200 5 0 0 0 1188.500 658 V415Z" fill="url(#cylg)"/>
<ellipse cx="1179.200" cy="414.500" rx="9.800" ry="5" fill="#7c878f" stroke="#222"/>
<ellipse cx="1179.200" cy="412.500" rx="7" ry="3.500" fill="#aab4bb" stroke="#444" stroke-width=".7"/>
</g>
<use href="#axis" x="1079" y="648.500"/>

<!-- list tab -->
<rect x="1014.500" y="447.500" width="32" height="33" fill="#fff" stroke="#ccc"/>
<rect x="1013" y="448" width="3" height="32" fill="#fff"/>
<path d="M1027 456.500 H1040 M1027 464.500 H1040 M1027 472.500 H1040" stroke="#333"/>
<path d="M1021 459 L1024 462 L1027 459" stroke="#333" fill="none"/>
<g transform="translate(1347 845)"><path d="M-5 -2 A6 5 0 0 1 6 -2" fill="none" stroke="#333" stroke-width="1.300"/><rect x="-5" y="2" width="12" height="4" fill="#fff" stroke="#333"/></g>

<!-- bottom tabs -->
<path d="M809 856.500 H1015" stroke="#ccc"/>
<rect x="809" y="857" width="544" height="25" fill="#d5d5d5"/>
<rect x="842" y="857" width="40" height="25" fill="#e5e5e5"/>
<path d="M878 857 H1007 L1015 869.500 L1008 882 H878 L885 869.500Z" fill="#fff"/>
<path d="M816 870.500 H834 M825 862 V879" stroke="#555" stroke-width="2.400"/>
<path d="M861 860 L870 869 V877 H864 V871 H858 V877 H852 V869Z" fill="#555"/>
<text x="899" y="873" style="font-size:15.500px;fill:#777" textLength="95" lengthAdjust="spacingAndGlyphs">Mirrored parts a</text>
<rect x="994" y="857" width="12" height="25" fill="#fff"/>
<rect x="1016" y="857" width="200" height="25" fill="#fff"/>
<use href="#asm" x="1036" y="869"/>
<text x="1049" y="875" style="font-size:16px;fill:#333" textLength="131" lengthAdjust="spacingAndGlyphs">Assembly 2-Mirrored</text>
</g>
</svg>
</body></html>
